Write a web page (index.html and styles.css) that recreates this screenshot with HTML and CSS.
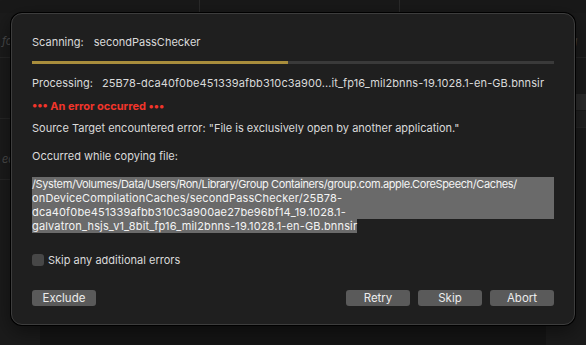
FILE: index.html
```html
<!DOCTYPE html>
<html lang="en">
  <head>
    <meta charset="UTF-8" />
    <meta name="viewport" content="width=device-width, initial-scale=1.0" />
    <title>Copy error</title>
    <link rel="stylesheet" href="styles.css">
  </head>
  <body>
    <div class="backdrop">
      <div class="tabs">
        <div class="tab"></div>
        <div class="tab"></div>
        <div class="tab last"></div>
      </div>
      <div class="behind">
        <div class="side left">
          <div class="ghost">fo</div>
          <div class="ghost low">ead</div>
        </div>
        <div class="side right">
          <div class="ghost">rag</div>
          <div class="band"></div>
          <div class="band dim"></div>
        </div>
      </div>
    </div>

    <div class="dialog">
      <div class="line">Scanning:<span class="value">secondPassChecker</span></div>
      <div class="progress"><div class="fill"></div></div>
      <div class="line processing">Processing:<span class="value wide">25B78-dca40f0be451339afbb310c3a900...it_fp16_mil2bnns-19.1028.1-en-GB.bnnsir</span></div>
      <div class="line error">••• An error occurred •••</div>
      <div class="line source">Source Target encountered error: "File is exclusively open by another application."</div>
      <div class="line occurred">Occurred while copying file:</div>
      <div class="path">
        <div class="sel first">/System/Volumes/Data/Users/Ron/Library/Group Containers/group.com.apple.CoreSpeech/Caches/</div>
        <div class="sel">onDeviceCompilationCaches/secondPassChecker/25B78-</div>
        <div class="sel">dca40f0be451339afbb310c3a900ae27be96bf14_19.1028.1-</div>
        <div class="sel end">galvatron_hsjs_v1_8bit_fp16_mil2bnns-19.1028.1-en-GB.bnnsir</div>
      </div>
      <label class="check"><span class="box"></span>Skip any additional errors</label>
      <div class="buttons">
        <button>Exclude</button>
        <div class="spacer"></div>
        <button>Retry</button>
        <button>Skip</button>
        <button>Abort</button>
      </div>
    </div>
  </body>
</html>
```

FILE: styles.css
```css
body {
  margin: 0;
  width: 586px;
  height: 345px;
  overflow: hidden;
  background-color: #151515;
  font-family: Inter, "Liberation Sans", sans-serif;
  font-size: 11px;
  color: #dadada;
}

.backdrop {
  height: 345px;
  display: flex;
  flex-direction: column;
}

.tabs {
  display: flex;
  height: 13px;
  background-color: #191919;
}

.tab {
  width: 199px;
  border-right: 1px solid #2a2a2a;
}

.tab.last {
  flex: 1;
  border-right: none;
}

.behind {
  flex: 1;
  display: flex;
  justify-content: space-between;
}

.side {
  width: 40px;
  background-color: #1b1b1b;
}

.ghost {
  height: 44px;
  line-height: 56px;
  border-bottom: 1px solid #262626;
  font-style: italic;
  color: #4a4a4a;
  padding-left: 2px;
}

.side.left .ghost.low {
  height: 60px;
  line-height: 80px;
  margin-top: 60px;
  border-top: 1px solid #262626;
}

.side.right .ghost {
  padding-left: 14px;
}

.band {
  height: 16px;
  margin-top: 36px;
  background-color: #2b2b2b;
}

.band.dim {
  margin-top: 1px;
  height: 16px;
  background-color: #212121;
  border-bottom: 1px solid #262626;
}

.dialog {
  position: absolute;
  left: 11px;
  top: 13px;
  width: 522px;
  height: 269px;
  padding: 21px 20px 20px 20px;
  background-color: #1f1f1f;
  border: 1px solid #3d3d3d;
  border-radius: 11px;
  box-shadow: 0 0 0 1px #000, 0 6px 20px rgba(0, 0, 0, 0.5);
  display: flex;
  flex-direction: column;
}

.line {
  line-height: 14px;
  white-space: nowrap;
}

.value {
  margin-left: 10px;
}

.value.wide {
  margin-left: 9px;
  letter-spacing: 0.1px;
}

.progress {
  margin-top: 12px;
  height: 3px;
  background-color: #3a3a3a;
}

.fill {
  width: 49%;
  height: 3px;
  background-color: #a88d3c;
}

.processing {
  margin-top: 12px;
}

.error {
  margin-top: 9px;
  color: #f2352b;
  font-weight: 700;
}

.source {
  margin-top: 8px;
}

.occurred {
  margin-top: 14px;
}

.path {
  margin-top: 14px;
  line-height: 14px;
  color: #f4f4f4;
  letter-spacing: 0.15px;
}

.sel {
  background-color: #6a6a6a;
  white-space: nowrap;
}

.sel.first {
  letter-spacing: -0.38px;
}

.sel.end {
  width: fit-content;
}

.check {
  margin-top: 20px;
  display: flex;
  align-items: center;
  gap: 4px;
  line-height: 14px;
}

.box {
  width: 12px;
  height: 12px;
  border-radius: 3px;
  background-color: #474747;
  border: none;
}

.buttons {
  margin-top: 23px;
  display: flex;
  gap: 8px;
}

.spacer {
  flex: 1;
}

button {
  width: 64px;
  height: 16px;
  padding: 0;
  border: none;
  border-radius: 3px;
  background-color: #5a5a5a;
  color: #ececec;
  font-family: Inter, "Liberation Sans", sans-serif;
  font-size: 11.5px;
  font-weight: 400;
  line-height: 16px;
}
```
